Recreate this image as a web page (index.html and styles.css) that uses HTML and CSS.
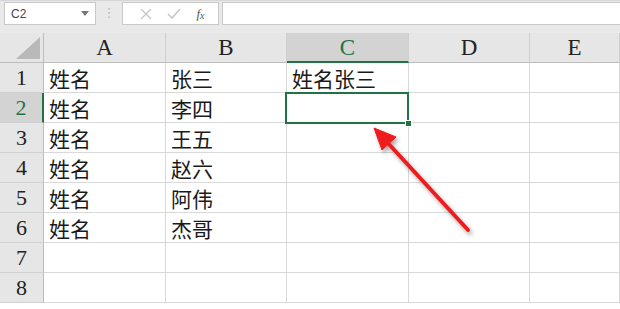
FILE: index.html
```html
<!DOCTYPE html>
<html lang="zh-CN">
<head>
  <meta charset="utf-8">
  <title>Sheet1</title>
  <link rel="stylesheet" href="styles.css">
</head>
<body>
  <div class="formula-bar">
    <div class="name-box">
      <span>C2</span>
      <svg class="caret" width="8" height="5" viewBox="0 0 8 5"><path d="M0 0h8L4 5z" fill="#777"/></svg>
    </div>
    <div class="grip">⋮</div>
    <div class="fx-box">
      <svg width="12" height="12" viewBox="0 0 12 12"><path d="M1 1l10 10M11 1L1 11" stroke="#c8c8c8" stroke-width="1.4" fill="none"/></svg>
      <svg width="14" height="12" viewBox="0 0 14 12"><path d="M1 6l4 4 8-9" stroke="#c8c8c8" stroke-width="1.6" fill="none"/></svg>
      <span class="fx">f<sub>x</sub></span>
    </div>
    <div class="formula-input"></div>
  </div>

  <div class="sheet">
    <div class="corner"><span class="tri"></span></div>
    <div class="col-head">A</div>
    <div class="col-head">B</div>
    <div class="col-head active">C</div>
    <div class="col-head">D</div>
    <div class="col-head">E</div>

    <div class="row-head">1</div>
    <div class="cell">姓名</div><div class="cell">张三</div><div class="cell">姓名张三</div><div class="cell"></div><div class="cell"></div>

    <div class="row-head active">2</div>
    <div class="cell">姓名</div><div class="cell">李四</div><div class="cell selected"></div><div class="cell"></div><div class="cell"></div>

    <div class="row-head">3</div>
    <div class="cell">姓名</div><div class="cell">王五</div><div class="cell"></div><div class="cell"></div><div class="cell"></div>

    <div class="row-head">4</div>
    <div class="cell">姓名</div><div class="cell">赵六</div><div class="cell"></div><div class="cell"></div><div class="cell"></div>

    <div class="row-head">5</div>
    <div class="cell">姓名</div><div class="cell">阿伟</div><div class="cell"></div><div class="cell"></div><div class="cell"></div>

    <div class="row-head">6</div>
    <div class="cell">姓名</div><div class="cell">杰哥</div><div class="cell"></div><div class="cell"></div><div class="cell"></div>

    <div class="row-head">7</div>
    <div class="cell"></div><div class="cell"></div><div class="cell"></div><div class="cell"></div><div class="cell"></div>

    <div class="row-head">8</div>
    <div class="cell"></div><div class="cell"></div><div class="cell"></div><div class="cell"></div><div class="cell"></div>
  </div>

  <!-- annotation arrow drawn over the sheet -->
  <svg class="arrow" width="620" height="309" viewBox="0 0 620 309">
    <defs>
      <filter id="shadow" x="-20%" y="-20%" width="140%" height="140%">
        <feDropShadow dx="2" dy="3" stdDeviation="2" flood-color="#000" flood-opacity="0.35"/>
      </filter>
    </defs>
    <g filter="url(#shadow)" fill="#ee1d1d" stroke="#ee1d1d">
      <line x1="468" y1="230" x2="386" y2="141" stroke-width="4" stroke-linecap="round"/>
      <polygon points="374,128 382,150 396,137" stroke-width="1"/>
    </g>
  </svg>
</body>
</html>
```

FILE: styles.css
```css
html,
body {
  margin: 0;
  height: 100%;
}

body {
  width: 620px;
  height: 309px;
  overflow: hidden;
  position: relative;
  background: #fff;
  font-family: "Liberation Serif", "Noto Sans CJK SC", serif;
}

.formula-bar {
  display: flex;
  align-items: flex-start;
  height: 33px;
  padding: 1px 0 0 4px;
  box-sizing: border-box;
  background: #e9e9e9;
  border-top: 1px solid #d6d6d6;
}

.name-box,
.fx-box,
.formula-input {
  height: 23px;
  box-sizing: border-box;
  background: #fff;
  border: 1px solid #c9c9c9;
}

.name-box {
  width: 92px;
  display: flex;
  align-items: center;
  justify-content: space-between;
  padding: 0 6px 0 6px;
  font: 12px "Liberation Sans", Arial, sans-serif;
  color: #444;
}

.grip {
  width: 26px;
  text-align: center;
  color: #b5b5b5;
  font: 13px "DejaVu Sans", sans-serif;
  line-height: 22px;
}

.fx-box {
  width: 97px;
  display: flex;
  align-items: center;
  justify-content: space-around;
  padding: 0 6px 0 10px;
}

.fx {
  font: italic 13px "Liberation Serif", serif;
  color: #555;
}

.fx sub {
  font-size: 10px;
  vertical-align: -1px;
}

.formula-input {
  flex: 1;
  margin-left: 3px;
  border-right: none;
}

.sheet {
  display: grid;
  grid-template-columns: 44px 122px 121px 122px 121px 1fr;
  grid-template-rows: repeat(9, 30px);
}

.sheet > div {
  box-sizing: border-box;
}

.corner,
.col-head,
.row-head {
  background: #e6e6e6;
  color: #222;
}

.corner {
  border-right: 1px solid #bdbdbd;
  border-bottom: 1px solid #bdbdbd;
  display: flex;
  align-items: flex-end;
  justify-content: flex-end;
  padding: 0 3px 3px 0;
}

.tri {
  width: 24px;
  height: 22px;
  background: #b9b9b9;
  clip-path: polygon(100% 0, 100% 100%, 0 100%);
}

.col-head {
  border-right: 1px solid #cfcfcf;
  border-bottom: 1px solid #bdbdbd;
  text-align: center;
  font-size: 23px;
  line-height: 30px;
}

.col-head.active {
  background: #d3d3d3;
  color: #217346;
  border-bottom: 2px solid #217346;
}

.row-head {
  border-right: 1px solid #bdbdbd;
  border-bottom: 1px solid #d0d0d0;
  text-align: center;
  font-size: 22px;
  line-height: 30px;
}

.row-head.active {
  background: #d3d3d3;
  color: #217346;
  border-right: 2px solid #217346;
}

.cell {
  border-right: 1px solid #d9d9d9;
  border-bottom: 1px solid #d9d9d9;
  padding-left: 5px;
  font: 21px/31px "Noto Sans CJK SC", sans-serif;
  color: #1a1a1a;
  white-space: nowrap;
}

.cell.selected {
  position: relative;
}

.cell.selected::before {
  content: "";
  position: absolute;
  left: -2px;
  top: -1px;
  right: -1px;
  bottom: -2px;
  border: 2px solid #217346;
}

.cell.selected::after {
  content: "";
  position: absolute;
  right: -4px;
  bottom: -5px;
  width: 5px;
  height: 5px;
  background: #217346;
  border: 1px solid #fff;
}

.arrow {
  position: absolute;
  left: 0;
  top: 0;
  pointer-events: none;
}
```
